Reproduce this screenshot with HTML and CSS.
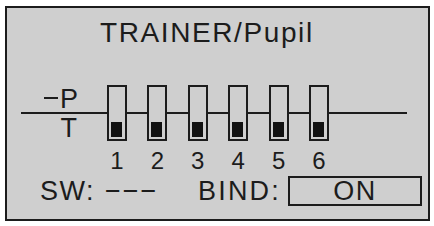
FILE: index.html
```html
<!DOCTYPE html>
<html lang="en">
<head>
  <meta charset="UTF-8" />
  <meta name="viewport" content="width=device-width,initial-scale=1.0" />
  <title>Trainer / Pupil</title>
  <link rel="stylesheet" href="styles.css">
</head>
<body>
  <div class="screen">
    <h1 class="title">TRAINER/Pupil</h1>

    <div class="mixer">
      <div class="side">
        <span class="side-p"><span class="dash"></span>P</span>
        <span class="side-t">T</span>
      </div>
      <div class="switches">
        <div class="sw"><span class="knob"></span></div>
        <div class="sw"><span class="knob"></span></div>
        <div class="sw"><span class="knob"></span></div>
        <div class="sw"><span class="knob"></span></div>
        <div class="sw"><span class="knob"></span></div>
        <div class="sw"><span class="knob"></span></div>
      </div>
    </div>

    <div class="numbers">
      <span>1</span><span>2</span><span>3</span><span>4</span><span>5</span><span>6</span>
    </div>

    <div class="status">
      <span class="lbl lbl-sw">SW:</span>
      <span class="dashes">&minus;&minus;&minus;</span>
      <span class="lbl lbl-bind">BIND:</span>
      <span class="bind-box">ON</span>
    </div>
  </div>
</body>
</html>
```

FILE: styles.css
```css
* { margin: 0; padding: 0; box-sizing: border-box; }
body {
  background: #fff;
  font-family: "Liberation Sans", Arial, sans-serif;
  color: #1c1c1c;
}
.screen {
  margin: 6px 0 0 5px;
  width: 425px;
  height: 215px;
  border: 2px solid #1c1c1c;
  background: #cfcfcf;
}
.title {
  margin: 11px 0 0 93px;
  font-size: 28px;
  font-weight: normal;
  line-height: 28px;
  letter-spacing: 1.6px;
}
.mixer {
  display: flex;
  width: 386px;
  height: 56px;
  margin: 38px 0 0 14px;
  background: linear-gradient(#1c1c1c, #1c1c1c) no-repeat 0 27px / 100% 2px;
}
.side {
  width: 86px;
  display: flex;
  flex-direction: column;
  align-items: flex-end;
  padding-right: 29px;
  font-size: 27px;
  line-height: 27px;
}
.side-p { height: 28px; padding-top: 1px; }
.dash {
  display: inline-block;
  width: 14px;
  height: 2px;
  margin: 0 2px 9px 0;
  background: #1c1c1c;
  vertical-align: baseline;
}
.side-t { height: 28px; padding-top: 2px; margin-right: 1px; }
.switches {
  display: flex;
  gap: 20.4px;
}
.sw {
  width: 20px;
  height: 56px;
  border: 2px solid #1c1c1c;
  background: #cfcfcf;
  display: flex;
  align-items: flex-end;
  padding: 0 0 2px 2px;
}
.knob {
  width: 11px;
  height: 15px;
  background: #111;
}
.numbers {
  display: flex;
  gap: 20.4px;
  margin: 8px 0 0 100px;
  font-size: 24px;
  line-height: 24px;
}
.numbers span {
  width: 20px;
  text-align: center;
}
.status {
  display: flex;
  align-items: center;
  margin-top: 3px;
  height: 30px;
  font-size: 27px;
  line-height: 27px;
}
.lbl { letter-spacing: 1.5px; }
.lbl-sw { margin-left: 33px; }
.dashes { margin-left: 10px; letter-spacing: 2px; }
.lbl-bind { margin-left: auto; margin-right: 7px; letter-spacing: 2.2px; }
.bind-box {
  width: 134px;
  height: 30px;
  margin-right: 6px;
  border: 2px solid #1c1c1c;
  text-align: center;
  line-height: 26px;
  letter-spacing: 1.5px;
}
```
